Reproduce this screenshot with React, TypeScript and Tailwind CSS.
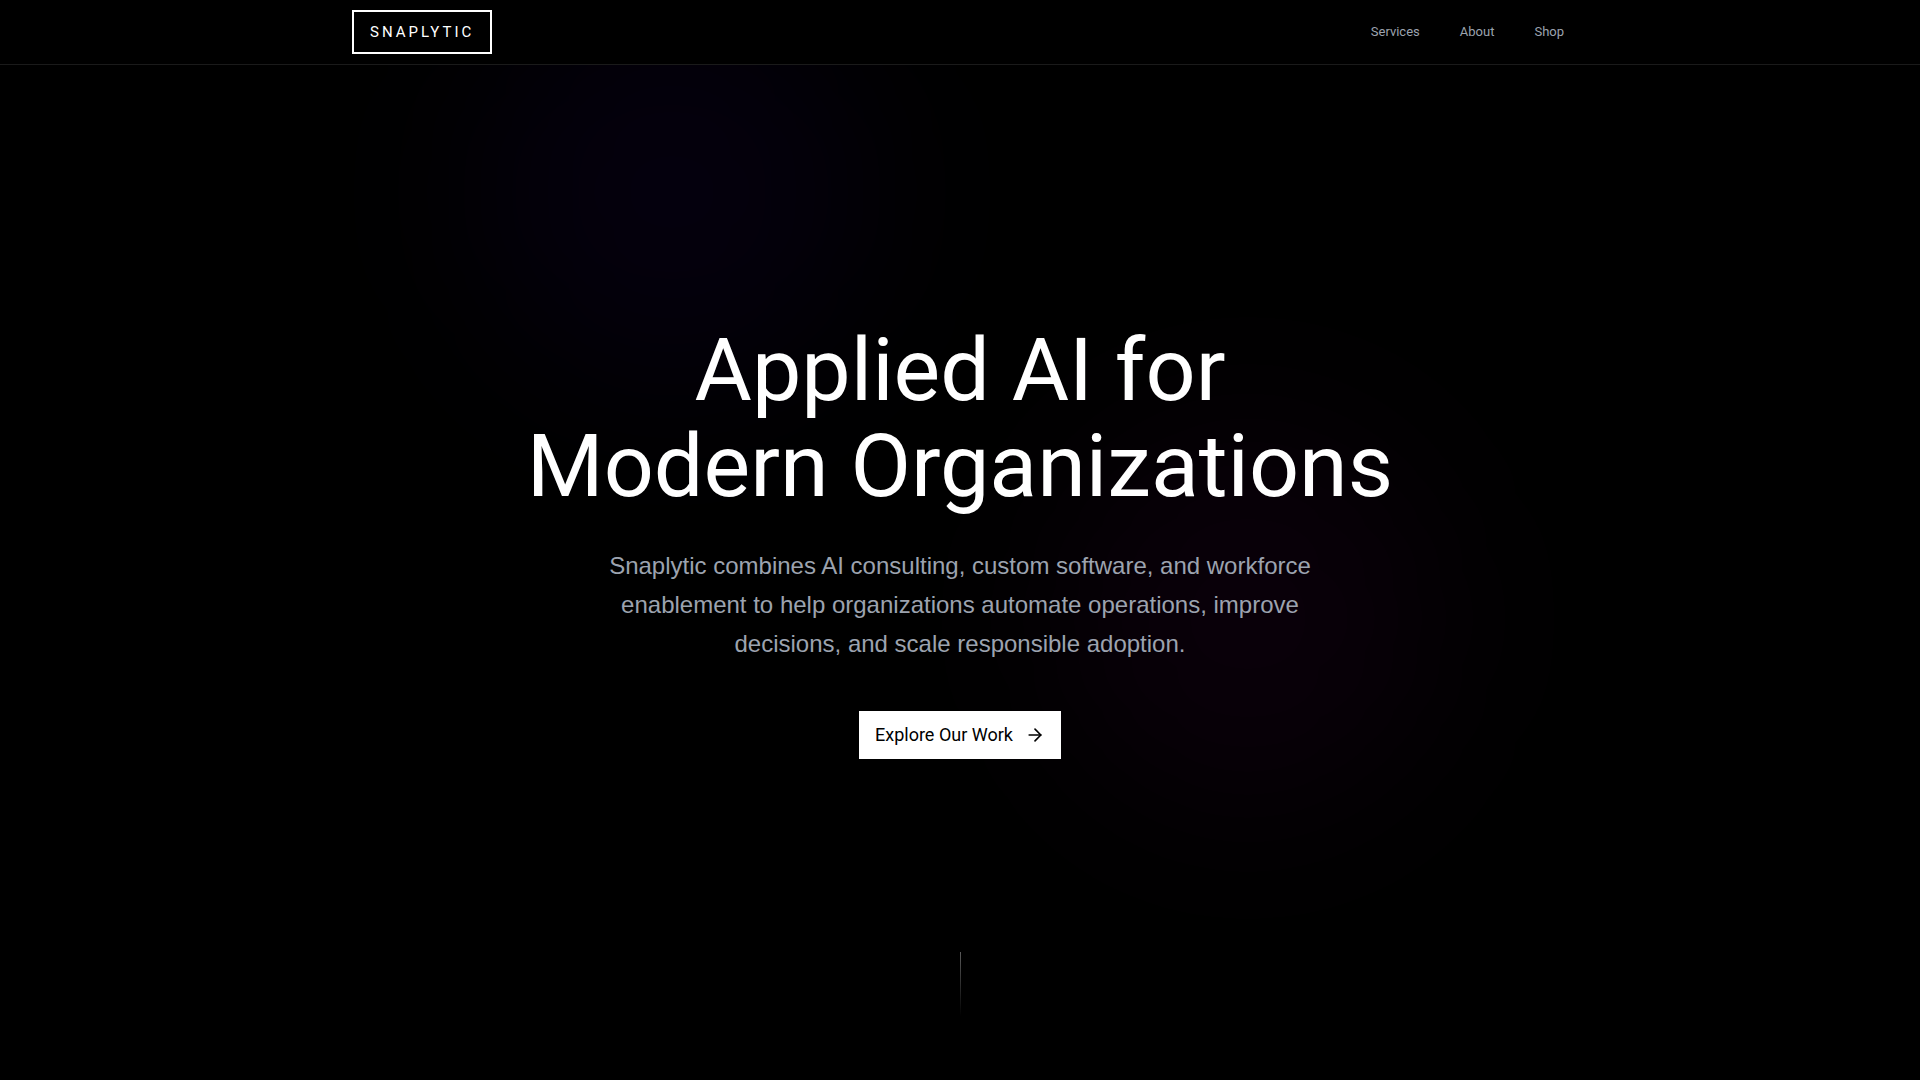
import React from "react";
import { ArrowRight } from "lucide-react";

const links = [
  { label: "Services", href: "#services" },
  { label: "About", href: "#about" },
  { label: "Shop", href: "#shop" },
];

function Header() {
  return (
    <header className="relative z-10 h-[65px] border-b border-[#1a1a1a] bg-black">
      <div className="mx-auto flex h-full max-w-7xl items-center justify-between px-8">
        <a
          href="#home"
          className="border-2 border-white px-4 py-2 text-[15px] leading-6 tracking-[3px] text-white"
        >
          SNAPLYTIC
        </a>
        <nav className="flex items-center gap-10 pr-1">
          {links.map((link) => (
            <a key={link.label} href={link.href} className="text-[13px] text-[#9ca3af]">
              {link.label}
            </a>
          ))}
        </nav>
      </div>
    </header>
  );
}

function Hero() {
  return (
    <main className="relative -mt-[65px] flex min-h-screen flex-col items-center justify-center overflow-hidden px-8 text-center">
      <div className="absolute top-0 left-1/4 h-96 w-96 rounded-full bg-[#04000d] blur-[80px]"></div>
      <div className="absolute right-1/4 bottom-1/4 h-96 w-96 rounded-full bg-[#090009] blur-[80px]"></div>
      <h1 className="relative text-[88px] leading-[96px] text-white">
        Applied AI for
        <br />
        Modern Organizations
      </h1>
      <p className="relative mt-8 max-w-3xl font-['Liberation_Sans',Arial,sans-serif] text-2xl leading-[39px] text-[#9ca3af]">
        Snaplytic combines AI consulting, custom software, and workforce
        <br />
        enablement to help organizations automate operations, improve
        <br />
        decisions, and scale responsible adoption.
      </p>
      <button
        type="button"
        className="relative mt-12 flex h-12 items-center gap-3 bg-white px-4 text-lg text-black"
      >
        Explore Our Work
        <ArrowRight className="h-5 w-5" strokeWidth={2} />
      </button>
      <div className="absolute inset-x-0 bottom-16 flex justify-center">
        <div className="h-16 w-px bg-linear-to-b from-[#5a5a5a] to-transparent"></div>
      </div>
    </main>
  );
}

export default function App() {
  return (
    <div className="min-h-screen bg-black font-[Roboto,sans-serif]">
      <Header />
      <Hero />
    </div>
  );
}
